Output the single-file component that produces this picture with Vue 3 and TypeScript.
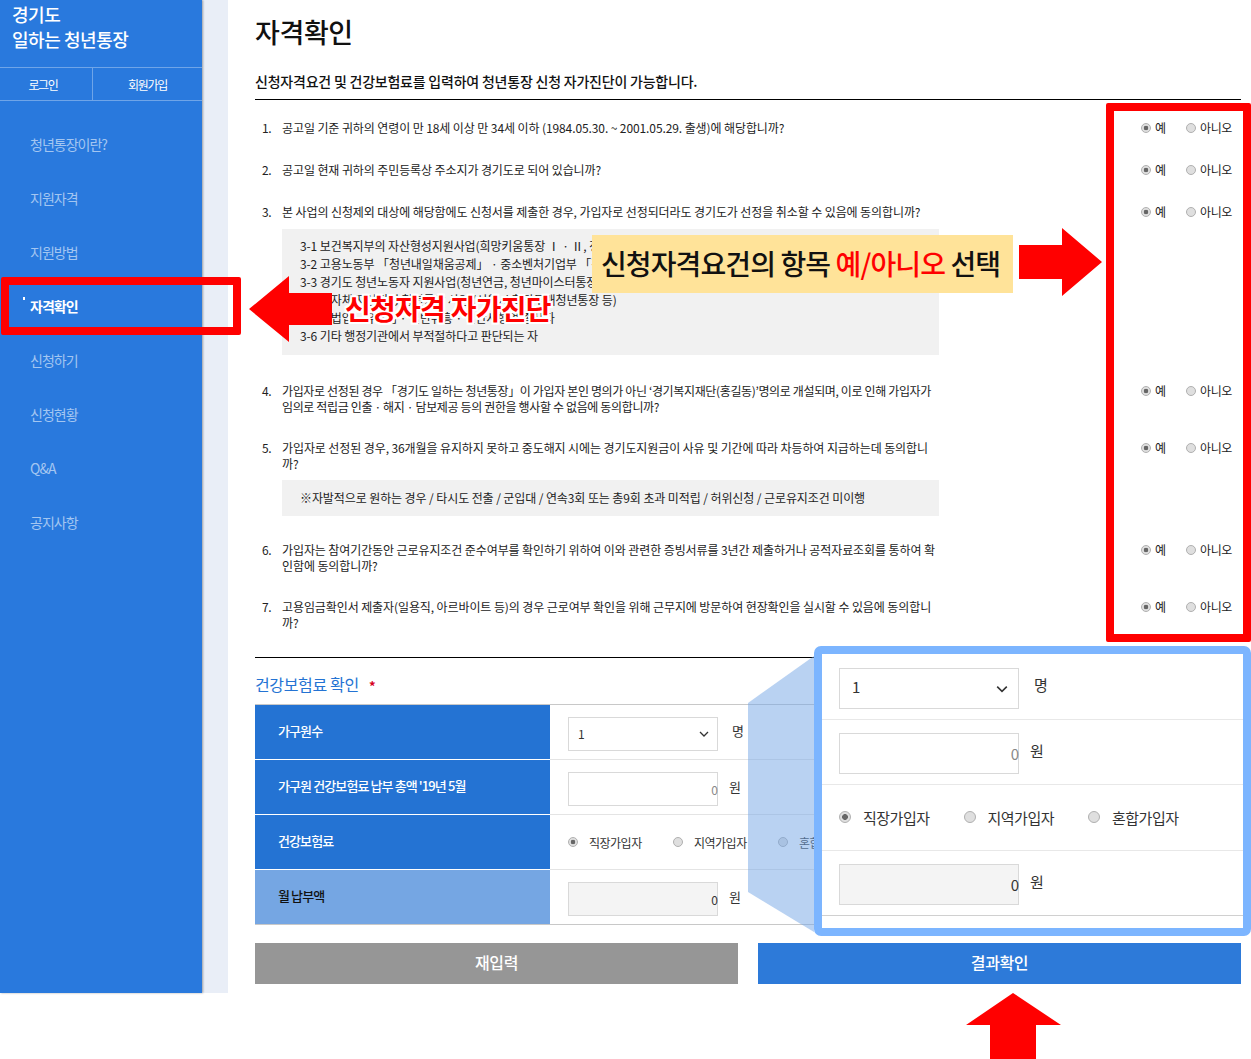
<script setup lang="ts">
import { ref } from 'vue'

interface Question {
  no: number
  text: string
  tall?: boolean
  tight?: boolean
  notes?: string[]
  noteClass?: string
}

const brand = ['경기도', '일하는 청년통장']
const menu = ['청년통장이란?', '지원자격', '지원방법', '자격확인', '신청하기', '신청현황', 'Q&A', '공지사항']
const activeMenu = ref('자격확인')

const questions: Question[] = [
  { no: 1, text: '공고일 기준 귀하의 연령이 만 18세 이상 만 34세 이하 (1984.05.30. ~ 2001.05.29. 출생)에 해당합니까?' },
  { no: 2, text: '공고일 현재 귀하의 주민등록상 주소지가 경기도로 되어 있습니까?' },
  {
    no: 3,
    text: '본 사업의 신청제외 대상에 해당함에도 신청서를 제출한 경우, 가입자로 선정되더라도 경기도가 선정을 취소할 수 있음에 동의합니까?',
    notes: [
      '3-1 보건복지부의 자산형성지원사업(희망키움통장 Ⅰ · Ⅱ, 청년희망키움통장 등)',
      '3-2 고용노동부 「청년내일채움공제」 · 중소벤처기업부 「청년재직자 내일채움공제」',
      '3-3 경기도 청년노동자 지원사업(청년연금, 청년마이스터통장)',
      '3-4 지자체 자산형성 청년통장 사업 (서울시 희망두배청년통장 등)',
      '3-5 불법업 · 유흥업 · 일반유흥 · 일반사행업 종사자',
      '3-6 기타 행정기관에서 부적절하다고 판단되는 자',
    ],
    noteClass: 'note-list',
  },
  {
    no: 4,
    tall: true,
    tight: true,
    text: '가입자로 선정된 경우 「경기도 일하는 청년통장」이 가입자 본인 명의가 아닌 ‘경기복지재단(홍길동)’명의로 개설되며, 이로 인해 가입자가 임의로 적립금 인출 · 해지 · 담보제공 등의 권한을 행사할 수 없음에 동의합니까?',
  },
  {
    no: 5,
    text: '가입자로 선정된 경우, 36개월을 유지하지 못하고 중도해지 시에는 경기도지원금이 사유 및 기간에 따라 차등하여 지급하는데 동의합니까?',
    notes: ['※자발적으로 원하는 경우 / 타시도 전출 / 군입대 / 연속3회 또는 총9회 초과 미적립 / 허위신청 / 근로유지조건 미이행'],
    noteClass: 'note-single',
  },
  {
    no: 6,
    tall: true,
    text: '가입자는 참여기간동안 근로유지조건 준수여부를 확인하기 위하여 이와 관련한 증빙서류를 3년간 제출하거나 공적자료조회를 통하여 확인함에 동의합니까?',
  },
  {
    no: 7,
    tall: true,
    text: '고용임금확인서 제출자(일용직, 아르바이트 등)의 경우 근로여부 확인을 위해 근무지에 방문하여 현장확인을 실시할 수 있음에 동의합니까?',
  },
]

const joinTypes = ['직장가입자', '지역가입자', '혼합가입자']
</script>

<template>
  <div class="screen">
    <div class="page">
      <aside class="sidebar">
        <h1 class="brand">
          <span v-for="line in brand" :key="line">{{ line }}</span>
        </h1>
        <div class="auth">
          <a>로그인</a>
          <a>회원가입</a>
        </div>
        <nav class="menu">
          <a v-for="item in menu" :key="item" :class="{ active: item === activeMenu }">{{ item }}</a>
        </nav>
      </aside>

      <main class="content">
        <h2 class="title">자격확인</h2>
        <p class="lead">신청자격요건 및 건강보험료를 입력하여 청년통장 신청 자가진단이 가능합니다.</p>

        <ol class="questions">
          <li
            v-for="q in questions"
            :key="q.no"
            class="question"
            :class="{ tall: q.tall, tight: q.tight, 'has-list': q.noteClass === 'note-list' }"
          >
            <span class="no">{{ q.no }}.</span>
            <div class="body">
              <p>{{ q.text }}</p>
              <div v-if="q.notes" class="note" :class="q.noteClass">
                <div v-for="n in q.notes" :key="n">{{ n }}</div>
              </div>
            </div>
            <div class="answers">
              <label class="yes"><input type="radio" :name="`q${q.no}`" checked />예</label>
              <label class="no-answer"><input type="radio" :name="`q${q.no}`" />아니오</label>
            </div>
          </li>
        </ol>

        <h3 class="section">건강보험료 확인 <i>*</i></h3>
        <div class="table">
          <div class="row">
            <div class="th">가구원수</div>
            <div class="td">
              <div class="select"><select><option>1</option></select><svg viewBox="0 0 10 6"><path d="M1 1l4 4 4-4" /></svg></div>
              <span class="unit unit-people">명</span>
            </div>
          </div>
          <div class="row">
            <div class="th">가구원 건강보험료 납부 총액 '19년 5월</div>
            <div class="td">
              <input class="amount" type="text" value="0" />
              <span class="unit">원</span>
            </div>
          </div>
          <div class="row">
            <div class="th">건강보험료</div>
            <div class="td">
              <label v-for="(t, i) in joinTypes" :key="t" class="join">
                <input type="radio" name="join" :checked="i === 0" />{{ t }}
              </label>
            </div>
          </div>
          <div class="row">
            <div class="th light">월 납부액</div>
            <div class="td">
              <input class="amount readonly" type="text" value="0" readonly />
              <span class="unit">원</span>
            </div>
          </div>
        </div>

        <div class="actions">
          <button class="reset">재입력</button>
          <button class="submit">결과확인</button>
        </div>
      </main>
    </div>

    <!-- annotations laid over the captured page -->
    <div class="mark mark-menu"></div>
    <div class="mark mark-answers"></div>

    <svg class="arrows" viewBox="0 0 1251 1059">
      <polygon class="beam" points="748,703 814,656 814,932 748,892" />
      <polygon class="arrow" points="249,309 289,276 289,293 332,293 332,325 289,325 289,342" />
      <polygon class="arrow" points="1102,262 1062,228 1062,245 1019,245 1019,279 1062,279 1062,296" />
      <polygon class="arrow" points="1013,993 1061,1025 1036,1025 1036,1059 990,1059 990,1025 966,1025" />
    </svg>

    <div class="caption-left">신청자격 자가진단</div>
    <div class="caption-right">신청자격요건의 항목 <b>예/아니오</b> 선택</div>

    <div class="lens">
      <div class="lens-row">
        <div class="select"><select><option>1</option></select><svg viewBox="0 0 10 6"><path d="M1 1l4 4 4-4" /></svg></div>
        <span class="unit unit-people">명</span>
      </div>
      <div class="lens-row">
        <input class="amount" type="text" value="0" />
        <span class="unit">원</span>
      </div>
      <div class="lens-row">
        <label v-for="(t, i) in joinTypes" :key="t" class="join">
          <input type="radio" name="join-lens" :checked="i === 0" />{{ t }}
        </label>
      </div>
      <div class="lens-row">
        <input class="amount readonly" type="text" value="0" readonly />
        <span class="unit">원</span>
      </div>
    </div>
  </div>
</template>

<style scoped>
.screen {
  position: relative;
  width: 1251px;
  height: 1059px;
  overflow: hidden;
  background: #fff;
  color: #222;
  font-family: "Noto Sans CJK KR", "Noto Sans", sans-serif;
  font-size: 12px;
}

.page {
  display: flex;
  height: 993px;
  background: #e9eef7;
}

.sidebar {
  flex: none;
  width: 202px;
  background: #2979dd;
  box-shadow: 1px 0 2px rgba(0, 0, 0, 0.35);
  color: #fff;
}

.brand {
  display: flex;
  flex-direction: column;
  height: 67px;
  margin: 0;
  padding: 2px 0 0 12px;
  box-sizing: border-box;
  font-size: 18px;
  font-weight: 500;
  line-height: 25px;
  letter-spacing: -0.45px;
}

.auth {
  display: flex;
  height: 34px;
  box-sizing: border-box;
  border-top: 1px solid #6fa5e8;
  border-bottom: 1px solid #6fa5e8;
  font-size: 12px;
  letter-spacing: -1.3px;
}

.auth a {
  display: flex;
  align-items: center;
  justify-content: center;
}

.auth a:first-child {
  width: 93px;
  padding-right: 6px;
  box-sizing: border-box;
  border-right: 1px solid #6fa5e8;
}

.auth a:last-child {
  flex: 1;
}

.menu {
  display: flex;
  flex-direction: column;
  padding-top: 16px;
}

.menu a {
  position: relative;
  height: 54px;
  padding-left: 30px;
  font-size: 14px;
  line-height: 54px;
  letter-spacing: -1px;
  color: #a3c6f1;
}

.menu a.active {
  color: #fff;
  font-weight: 700;
}

.menu a.active::before {
  content: "";
  position: absolute;
  left: 23px;
  top: 18px;
  width: 2px;
  height: 3px;
  background: #fff;
}

.content {
  flex: none;
  width: 986px;
  margin-left: 26px;
  padding: 0 10px 0 27px;
  background: #fff;
}

.title {
  margin: 0;
  padding-top: 12px;
  height: 55px;
  box-sizing: border-box;
  font-size: 27px;
  font-weight: 500;
  line-height: 40px;
  letter-spacing: -0.4px;
  color: #111;
}

.lead {
  height: 45px;
  margin: 0;
  padding-top: 18px;
  box-sizing: border-box;
  border-bottom: 1px solid #000;
  font-size: 14px;
  font-weight: 500;
  line-height: 16px;
  letter-spacing: -0.22px;
  color: #111;
}

.questions {
  margin: 0;
  padding: 7px 0 0;
  height: 558px;
  box-sizing: border-box;
  border-bottom: 1px solid #000;
  list-style: none;
}

.question {
  display: flex;
  padding: 13px 0;
  line-height: 16px;
}

.question.tall {
  padding-bottom: 12px;
}

.question.has-list {
  padding-bottom: 15px;
}

.no {
  flex: none;
  width: 20px;
  margin-left: 7px;
  letter-spacing: -0.5px;
}

.body {
  flex: none;
  width: 657px;
  letter-spacing: -0.1px;
}

.tight .body {
  letter-spacing: -0.36px;
}

.body p {
  margin: 0;
}

.note {
  margin-top: 9px;
  background: #f1f1f1;
  padding-left: 18px;
  white-space: nowrap;
  overflow: hidden;
}

.note-list {
  height: 126px;
  box-sizing: border-box;
  padding-top: 8px;
  line-height: 18px;
}

.note-single {
  height: 36px;
  margin-top: 8px;
  line-height: 36px;
}

.answers {
  position: relative;
  flex: 1;
  height: 16px;
  letter-spacing: -0.4px;
}

.answers label {
  position: absolute;
  top: 0;
  display: flex;
  align-items: center;
}

.answers .yes {
  left: 202px;
}

.answers .no-answer {
  left: 247px;
}

input[type="radio"] {
  flex: none;
  width: 10px;
  height: 10px;
  margin: 0 4px 0 0;
  border: 1px solid #b0b0b0;
  border-radius: 50%;
  box-sizing: border-box;
  appearance: none;
  background: #dfdfdf;
}

input[type="radio"]:checked {
  background: radial-gradient(circle, #666 0 2px, #dfdfdf 2.6px);
}

.section {
  height: 46px;
  margin: 0;
  padding-top: 16px;
  box-sizing: border-box;
  font-size: 16px;
  font-weight: 400;
  line-height: 20px;
  letter-spacing: -0.35px;
  color: #2473d3;
}

.section i {
  margin-left: 7px;
  font-style: normal;
  font-weight: 700;
  font-size: 13px;
  color: #d6001c;
}

.table {
  border-top: 1px solid #c8c8c8;
  border-bottom: 1px solid #c8c8c8;
}

.row {
  display: flex;
  height: 55px;
}

.row:last-child {
  height: 54px;
}

.row:not(:last-child) .td {
  border-bottom: 1px solid #e4e4e4;
}

.row:not(:last-child) .th {
  border-bottom: 1px solid #fff;
}

.th {
  flex: none;
  display: flex;
  align-items: center;
  width: 295px;
  padding: 0 0 3px 23px;
  box-sizing: border-box;
  background: #2473d3;
  color: #fff;
  font-size: 13px;
  font-weight: 500;
  letter-spacing: -0.9px;
}

.th.light {
  background: #75a6e3;
  color: #111;
}

.td {
  flex: 1;
  display: flex;
  align-items: center;
  padding-left: 18px;
  letter-spacing: -0.5px;
  color: #333;
}

.select {
  position: relative;
  flex: none;
  width: 150px;
  height: 34px;
  margin-top: 4px;
}

.select select {
  width: 100%;
  height: 100%;
  padding: 0 0 2px 9px;
  border: 1px solid #d9d9d9;
  border-radius: 0;
  box-sizing: border-box;
  appearance: none;
  background: #fff;
  color: #333;
  font: inherit;
}

.select svg {
  position: absolute;
  right: 9px;
  top: 14px;
  width: 10px;
  height: 6px;
  fill: none;
  stroke: #333;
  stroke-width: 1.3;
}

.amount {
  flex: none;
  width: 150px;
  height: 34px;
  margin-top: 4px;
  padding: 0;
  border: 1px solid #d9d9d9;
  border-right-width: 0;
  border-radius: 0;
  box-sizing: border-box;
  box-shadow: inset -1px 0 0 #d9d9d9;
  outline: none;
  background: #fff;
  color: #888;
  font: inherit;
  text-align: right;
}

.amount.readonly {
  background: #f4f4f4;
  color: #333;
}

.unit {
  margin-left: 11px;
  padding-bottom: 2px;
  font-size: 13px;
}

.unit-people {
  margin-left: 14px;
  padding-bottom: 4px;
}

.join {
  display: flex;
  flex: none;
  align-items: center;
  width: 105px;
}

.join input {
  margin-right: 11px;
}

.actions {
  display: flex;
  gap: 20px;
  margin-top: 18px;
}

.actions button {
  flex: 1;
  height: 41px;
  padding: 0 0 3px;
  border: 0;
  color: #fff;
  font-family: inherit;
  font-size: 16px;
  font-weight: 500;
  letter-spacing: -0.4px;
}

.reset {
  background: #969696;
}

.submit {
  background: #2d7ad9;
}

/* overlays */
.mark {
  position: absolute;
  box-sizing: border-box;
  border: 8px solid #f00;
  border-radius: 2px;
}

.mark-menu {
  left: 1px;
  top: 277px;
  width: 240px;
  height: 58px;
}

.mark-answers {
  left: 1106px;
  top: 103px;
  width: 145px;
  height: 539px;
}

.arrows {
  position: absolute;
  left: 0;
  top: 0;
  width: 1251px;
  height: 1059px;
  pointer-events: none;
}

.arrow {
  fill: #f00;
}

.beam {
  fill: rgba(115, 165, 229, 0.5);
}

.caption-left {
  position: absolute;
  left: 345px;
  top: 288px;
  color: #f00;
  font-size: 28px;
  font-weight: 700;
  line-height: 40px;
  letter-spacing: -0.75px;
  white-space: nowrap;
  text-shadow: 2px 0 0 #fff, -2px 0 0 #fff, 0 2px 0 #fff, 0 -2px 0 #fff, 2px 2px 0 #fff, -2px -2px 0 #fff, 2px -2px 0 #fff, -2px 2px 0 #fff;
}

.caption-right {
  position: absolute;
  left: 592px;
  top: 235px;
  width: 421px;
  height: 58px;
  padding-left: 9px;
  box-sizing: border-box;
  background: #ffe399;
  color: #111;
  font-size: 28px;
  font-weight: 500;
  line-height: 56px;
  letter-spacing: -0.9px;
  white-space: nowrap;
}

.caption-right b {
  font-weight: 500;
  color: #f00;
}

.lens {
  position: absolute;
  left: 814px;
  top: 646px;
  width: 437px;
  height: 290px;
  box-sizing: border-box;
  border: 8px solid #7cb5ff;
  border-radius: 7px;
  background: #fff;
  color: #333;
  font-size: 15px;
  letter-spacing: -0.5px;
}

.lens-row {
  display: flex;
  align-items: center;
  height: 65.5px;
  padding-left: 17px;
  box-sizing: border-box;
  border-bottom: 1px solid #e8e8e8;
}

.lens-row:last-child {
  border-bottom-color: #d0d0d0;
}

.lens .select,
.lens .amount {
  width: 180px;
  height: 41px;
  margin-top: 4px;
}

.lens .select select {
  padding: 0 0 3px 12px;
}

.lens .select svg {
  right: 11px;
  top: 17px;
  width: 12px;
  height: 8px;
}

.lens .unit {
  margin-left: 11px;
  padding-bottom: 2px;
  font-size: 15px;
}

.lens .unit-people {
  margin-left: 15px;
  padding-bottom: 4px;
}

.lens .join {
  width: 124.5px;
}

.lens .join input {
  width: 12px;
  height: 12px;
  margin-right: 12px;
}

.lens .join input:checked {
  background: radial-gradient(circle, #666 0 2.6px, #dfdfdf 3.2px);
}
</style>
